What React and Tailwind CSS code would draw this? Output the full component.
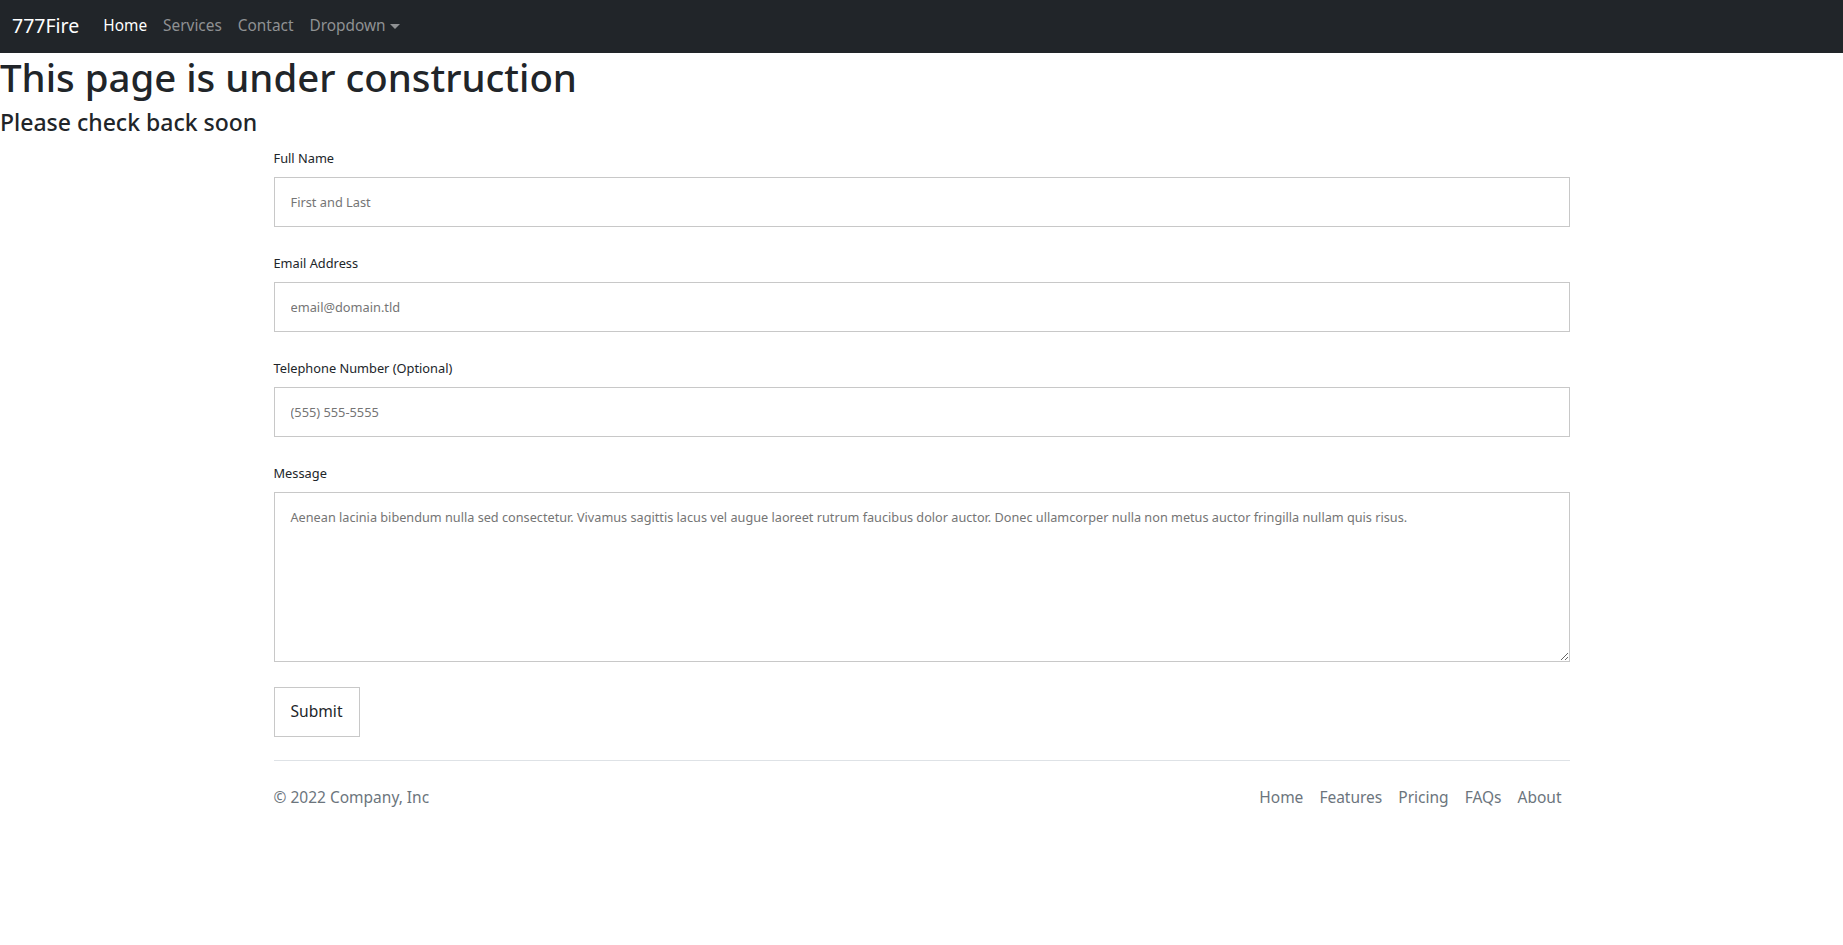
const navLinks = [
  { label: 'Home', active: true },
  { label: 'Services' },
  { label: 'Contact' }
];

const fields = [
  { id: 'name', label: 'Full Name', placeholder: 'First and Last', type: 'text' },
  { id: 'email', label: 'Email Address', placeholder: 'email@domain.tld', type: 'email' },
  { id: 'phone', label: 'Telephone Number (Optional)', placeholder: '(555) 555-5555', type: 'tel' }
];

const footerLinks = ['Home', 'Features', 'Pricing', 'FAQs', 'About'];

const Navbar = () => (
  <nav className="flex items-center h-[53px] px-3 pb-[2px] bg-[#212529]">
    <a href="#" className="mr-4 text-[19.5px] leading-[30px] text-white">
      777Fire
    </a>
    <ul className="flex items-center">
      {navLinks.map(link => (
        <li key={link.label}>
          <a
            href="#"
            className={`block px-2 text-[15.4px] leading-6 ${
              link.active ? 'text-white' : 'text-[#8f9193]'
            }`}
          >
            {link.label}
          </a>
        </li>
      ))}
      <li>
        <a href="#" className="flex items-center px-2 text-[15.4px] leading-6 text-[#8f9193]">
          Dropdown
          <span className="ml-1 mt-[2px] w-0 h-0 border-t-[5px] border-x-[5px] border-x-transparent border-t-[#8f9193]" />
        </a>
      </li>
    </ul>
  </nav>
);

const Field = ({ id, label, placeholder, type }) => (
  <div className="mb-[26px]">
    <label htmlFor={id} className="block mb-[9px] text-[12.8px] leading-5 text-[#212529]">
      {label}
    </label>
    <input
      id={id}
      type={type}
      placeholder={placeholder}
      className="block w-full h-[50px] px-4 text-[12.8px] border border-[#c8c8c8] bg-white outline-none placeholder:text-[#757575]"
    />
  </div>
);

export default function App() {
  return (
    <div className="min-h-screen bg-white text-[#212529] font-['Noto_Sans',sans-serif]">
      <Navbar />
      <h1 className="text-[38.4px] font-medium leading-[48px]">This page is under construction</h1>
      <h4 className="mt-[7px] text-[23px] font-medium leading-[29px]">Please check back soon</h4>

      <div className="w-[1320px] mx-auto px-3 pt-[11px]">
        <form>
          {fields.map(field => (
            <Field key={field.id} {...field} />
          ))}
          <div>
            <label htmlFor="message" className="block mb-[9px] text-[12.8px] leading-5 text-[#212529]">
              Message
            </label>
            <textarea
              id="message"
              placeholder="Aenean lacinia bibendum nulla sed consectetur. Vivamus sagittis lacus vel augue laoreet rutrum faucibus dolor auctor. Donec ullamcorper nulla non metus auctor fringilla nullam quis risus."
              className="block w-full h-[170px] px-4 pt-[14px] pb-4 text-[12.7px] leading-5 border border-[#c8c8c8] bg-white outline-none placeholder:text-[#757575]"
            />
          </div>
          <button
            type="button"
            className="mt-[25px] h-[50px] px-4 text-[15.6px] text-[#212529] border border-[#c8c8c8] bg-white"
          >
            Submit
          </button>
        </form>

        <footer className="flex items-center justify-between mt-[23px] pt-[24px] border-t border-[#dee2e6]">
          <p className="text-[15.5px] leading-6 text-[#6c757d]">© 2022 Company, Inc</p>
          <ul className="flex">
            {footerLinks.map(link => (
              <li key={link}>
                <a href="#" className="block px-2 text-[15.5px] leading-6 text-[#6c757d]">
                  {link}
                </a>
              </li>
            ))}
          </ul>
        </footer>
      </div>
    </div>
  );
}
